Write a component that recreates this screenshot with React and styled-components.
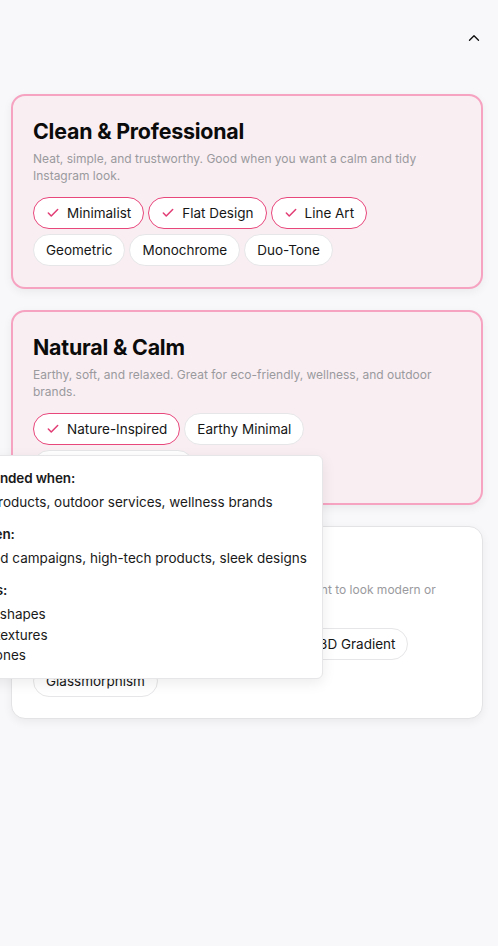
import React from "react";
import styled, { createGlobalStyle } from "styled-components";
import { Check, ChevronUp } from "lucide-react";

const GlobalStyle = createGlobalStyle`
	body {
		margin: 0;
		background: #f8f8fa;
		font-family: Inter, "Noto Sans", "Liberation Sans", sans-serif;
		color: #111;
	}
	* {
		box-sizing: border-box;
	}
`;

const styles = [
	{
		title: "Clean & Professional",
		description:
			"Neat, simple, and trustworthy. Good when you want a calm and tidy Instagram look.",
		selected: true,
		tags: [
			{ name: "Minimalist", on: true },
			{ name: "Flat Design", on: true },
			{ name: "Line Art", on: true },
			{ name: "Geometric" },
			{ name: "Monochrome" },
			{ name: "Duo-Tone" },
		],
	},
	{
		title: "Natural & Calm",
		description:
			"Earthy, soft, and relaxed. Great for eco-friendly, wellness, and outdoor brands.",
		selected: true,
		tags: [
			{ name: "Nature-Inspired", on: true },
			{ name: "Earthy Minimal" },
			{ name: "Organic Hand-Drawn" },
		],
	},
	{
		title: "Modern & Trendy",
		description:
			"Bright, bold, and eye-catching. Great when you want to look modern or futuristic.",
		selected: false,
		tags: [
			{ name: "Futuristic" },
			{ name: "Abstract" },
			{ name: "Neon Glow" },
			{ name: "3D Gradient" },
			{ name: "Glassmorphism" },
		],
	},
];

const App = () => {
	return (
		<Page>
			<GlobalStyle />
			<Header>
				<Toggle aria-label="Collapse">
					<ChevronUp size={18} strokeWidth={1.8} />
				</Toggle>
			</Header>

			<CardList>
				{styles.map((group) => (
					<Card key={group.title} $selected={group.selected}>
						<h3>{group.title}</h3>
						<p>{group.description}</p>
						<Tags>
							{group.tags.map((tag) => (
								<Tag key={tag.name} $on={tag.on}>
									{tag.on && <Check size={14} strokeWidth={2.6} />}
									{tag.name}
								</Tag>
							))}
						</Tags>
					</Card>
				))}
			</CardList>

			<Tooltip>
				<section>
					<h4>Recommended when:</h4>
					<p>Organic products, outdoor services, wellness brands</p>
				</section>
				<section>
					<h4>Avoid when:</h4>
					<p>Fast-paced campaigns, high-tech products, sleek designs</p>
				</section>
				<section>
					<h4>Main traits:</h4>
					<ul>
						<li>Organic shapes</li>
						<li>Natural textures</li>
						<li>Earthy tones</li>
					</ul>
				</section>
			</Tooltip>
		</Page>
	);
};

const Page = styled.div`
	position: relative;
	width: 498px;
	min-height: 946px;
	padding: 0 15px 40px 11px;
	overflow: hidden;
`;

const Header = styled.header`
	height: 76px;
	display: flex;
	align-items: center;
	justify-content: flex-end;
`;

const Toggle = styled.button`
	display: flex;
	align-items: center;
	justify-content: center;
	width: 18px;
	height: 18px;
	padding: 0;
	border: none;
	background: none;
	color: #111;
	cursor: pointer;
`;

const CardList = styled.div`
	display: flex;
	flex-direction: column;
	gap: 21px;
	margin-top: 18px;
`;

const Card = styled.div`
	padding: ${(p) => (p.$selected ? "20px 20px 21px" : "20px 21px 21px")};
	border-radius: 14px;
	border: ${(p) => (p.$selected ? "2px solid #f6a3c1" : "1px solid #e3e3e6")};
	background: ${(p) => (p.$selected ? "#f9eef2" : "#ffffff")};
	box-shadow: 0 3px 10px rgba(0, 0, 0, 0.06);

	h3 {
		margin: 0;
		font-size: 21.4px;
		line-height: 30px;
		font-weight: 700;
		color: #0b0b0b;
		letter-spacing: -0.2px;
	}

	p {
		margin: 4px 0 13px;
		font-size: 12px;
		line-height: 17px;
		color: #9a9a9e;
	}
`;

const Tags = styled.div`
	display: flex;
	flex-wrap: wrap;
	gap: 5px 4px;
`;

const Tag = styled.span`
	display: inline-flex;
	align-items: center;
	gap: 7px;
	height: 32px;
	padding: 0 12px;
	border-radius: 16px;
	border: 1px solid ${(p) => (p.$on ? "#e8477c" : "#e6e6e8")};
	background: #ffffff;
	font-size: 13.5px;
	color: #161616;
	white-space: nowrap;

	svg {
		color: #e23d74;
	}
`;

const Tooltip = styled.div`
	position: absolute;
	top: 455px;
	left: -81px;
	display: flex;
	flex-direction: column;
	gap: 12px;
	padding: 12px 15px 12px 16px;
	background: #ffffff;
	border: 1px solid #e6e6e8;
	border-radius: 6px;
	box-shadow: 0 4px 14px rgba(0, 0, 0, 0.08);
	white-space: nowrap;
	font-size: 13.5px;
	line-height: 20px;
	color: #1a1a1a;

	h4 {
		margin: 0 0 4px;
		font-size: 13.5px;
		line-height: 20px;
		font-weight: 600;
		letter-spacing: -0.15px;
	}

	p {
		margin: 0;
	}

	ul {
		margin: 0;
		padding: 0 0 0 10px;
		list-style: disc;
	}

	li {
		line-height: 20.5px;
	}
`;

export default App;
